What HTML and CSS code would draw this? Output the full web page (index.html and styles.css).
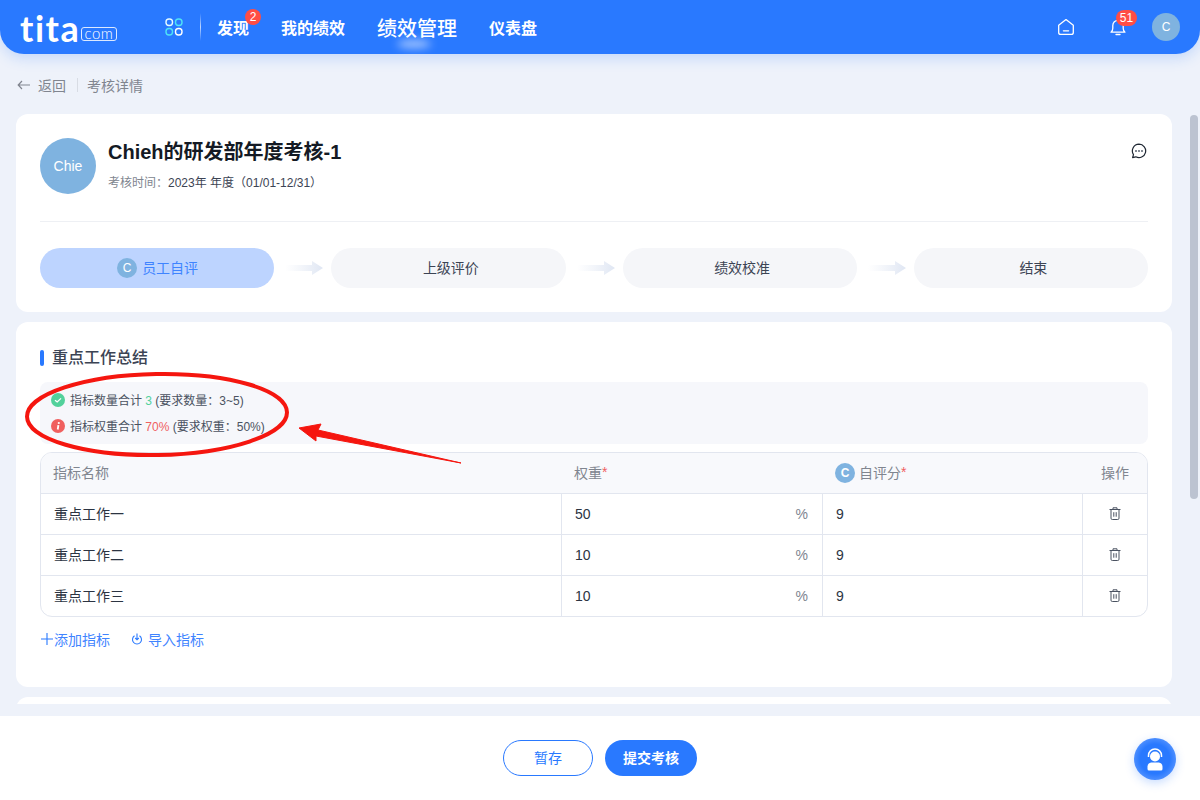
FILE: index.html
```html
<!DOCTYPE html>
<html lang="zh-CN">
<head>
<meta charset="utf-8">
<title>考核详情</title>
<link rel="stylesheet" href="styles.css">
</head>
<body>
<div class="page">
  <header class="topbar">
    <div class="logo"><span class="logo-main">tita</span><span class="logo-com">com</span></div>
    <svg class="apps" width="18" height="18" viewBox="0 0 18 18" fill="none" stroke-width="1.4">
      <rect x="1" y="1" width="6.500" height="6.500" rx="3" stroke="#e6fbff"/><rect x="10.500" y="1" width="6.500" height="6.500" rx="3" stroke="#4fe3f5"/>
      <rect x="1" y="10.500" width="6.500" height="6.500" rx="3" stroke="#4fe3f5"/><rect x="10.500" y="10.500" width="6.500" height="6.500" rx="3" stroke="#fff"/>
    </svg>
    <span class="nav-sep"></span>
    <nav class="nav">
      <a class="nav-item">发现<span class="badge badge-round">2</span></a>
      <a class="nav-item">我的绩效</a>
      <a class="nav-item nav-active">绩效管理<span class="glow"></span></a>
      <a class="nav-item">仪表盘</a>
    </nav>
    <div class="top-right">
      <svg width="18" height="18" viewBox="0 0 18 18" fill="none" stroke="#fff" stroke-width="1.3">
        <path d="M1.700 7.200 9 1.600l7.300 5.600v7.200a2 2 0 0 1-2 2H3.700a2 2 0 0 1-2-2z" stroke-linejoin="round"/><path d="M6.400 12.800h5.200" stroke-linecap="round"/>
      </svg>
      <div class="bell">
        <svg width="18" height="18" viewBox="0 0 18 18" fill="none" stroke="#fff" stroke-width="1.3">
          <path d="M2 14.200c1.300-1 1.800-2.200 1.800-4V7.500a5.200 5.200 0 0 1 10.400 0v2.700c0 1.800.5 3 1.800 4z" stroke-linejoin="round"/><path d="M7 16.500h4" stroke-linecap="round"/>
        </svg>
        <span class="badge badge-pill">51</span>
      </div>
      <div class="avatar avatar-top">C</div>
    </div>
  </header>

  <main class="main">
    <div class="crumbs">
      <svg class="crumb-arrow" width="14" height="10" viewBox="0 0 14 10" fill="none" stroke="#80858f" stroke-width="1.2"><path d="M13 5H1.200M5 1 1.200 5 5 9"/></svg>
      <span class="crumb-back">返回</span>
      <span class="crumb-sep"></span>
      <span class="crumb-title">考核详情</span>
    </div>

    <section class="card card-head">
      <div class="head-row">
        <div class="avatar avatar-big">Chie</div>
        <div class="head-text">
          <h1 class="title">Chieh的研发部年度考核-1</h1>
          <p class="subtitle"><span class="muted">考核时间：</span>2023年 年度（01/01-12/31）</p>
        </div>
        <svg class="comment" width="16" height="16" viewBox="0 0 16 16" fill="none" stroke="#1f2733" stroke-width="1.2">
          <path d="M8 1.200a6.700 6.700 0 1 1-3.200 12.600L1.600 14.600l.9-3A6.700 6.700 0 0 1 8 1.200z" stroke-linejoin="round"/>
          <g fill="#5b6472" stroke="none"><circle cx="5" cy="8" r="1"/><circle cx="8" cy="8" r="1"/><circle cx="11" cy="8" r="1"/></g>
        </svg>
      </div>
      <div class="steps">
        <div class="step step-on"><span class="avatar avatar-step">C</span>员工自评</div>
        <svg class="step-arrow" width="57" height="14" viewBox="0 0 57 14"><defs><linearGradient id="ag" x1="0" x2="1" y1="0" y2="0"><stop offset="0" stop-color="#e6ebf5" stop-opacity="0"/><stop offset="1" stop-color="#dfe6f3"/></linearGradient></defs><path d="M11 4h27V0l11 7-11 7v-4H11z" fill="url(#ag)"/></svg>
        <div class="step">上级评价</div>
        <svg class="step-arrow" width="57" height="14" viewBox="0 0 57 14"><path d="M11 4h27V0l11 7-11 7v-4H11z" fill="url(#ag)"/></svg>
        <div class="step">绩效校准</div>
        <svg class="step-arrow" width="57" height="14" viewBox="0 0 57 14"><path d="M11 4h27V0l11 7-11 7v-4H11z" fill="url(#ag)"/></svg>
        <div class="step">结束</div>
      </div>
    </section>

    <section class="card card-body">
      <h2 class="section-title">重点工作总结</h2>
      <div class="notice">
        <div class="notice-line">
          <svg width="14" height="14" viewBox="0 0 14 14"><circle cx="7" cy="7" r="7" fill="#52d19b"/><path d="M4 7.200 6.200 9 10 5.400" fill="none" stroke="#fff" stroke-width="1.3"/></svg>
          <span class="notice-text">指标数量合计 <em class="ok">3</em> (要求数量：3~5)</span>
        </div>
        <div class="notice-line">
          <svg width="14" height="14" viewBox="0 0 14 14"><circle cx="7" cy="7" r="7" fill="#f0605f"/><path d="M7.400 6.200 6.700 10.500" stroke="#fff" stroke-width="1.800"/><circle cx="7.800" cy="4" r="1.100" fill="#fff"/></svg>
          <span class="notice-text">指标权重合计 <em class="bad">70%</em> (要求权重：50%)</span>
        </div>
      </div>
      <div class="table">
        <div class="row row-head">
          <div class="cell">指标名称</div>
          <div class="cell">权重<i class="req">*</i></div>
          <div class="cell"><span class="avatar avatar-th">C</span>自评分<i class="req">*</i></div>
          <div class="cell cell-op">操作</div>
        </div>
        <div class="row">
          <div class="cell cell-name">重点工作一</div>
          <div class="cell cell-num">50<span class="pct">%</span></div>
          <div class="cell cell-num">9</div>
          <div class="cell cell-op"><svg class="trash" width="12" height="13" viewBox="0 0 12 13" fill="none" stroke="#4a5261"><path d="M.5 2.500h11M4 2.500V.8h4v1.700M2 2.500v8.700a1.300 1.300 0 0 0 1.300 1.300h5.400A1.300 1.300 0 0 0 10 11.200V2.500M4.800 5.200v4.500M7.200 5.200v4.500"/></svg></div>
        </div>
        <div class="row">
          <div class="cell cell-name">重点工作二</div>
          <div class="cell cell-num">10<span class="pct">%</span></div>
          <div class="cell cell-num">9</div>
          <div class="cell cell-op"><svg class="trash" width="12" height="13" viewBox="0 0 12 13" fill="none" stroke="#4a5261"><path d="M.5 2.500h11M4 2.500V.8h4v1.700M2 2.500v8.700a1.300 1.300 0 0 0 1.300 1.300h5.400A1.300 1.300 0 0 0 10 11.200V2.500M4.800 5.200v4.500M7.200 5.200v4.500"/></svg></div>
        </div>
        <div class="row">
          <div class="cell cell-name">重点工作三</div>
          <div class="cell cell-num">10<span class="pct">%</span></div>
          <div class="cell cell-num">9</div>
          <div class="cell cell-op"><svg class="trash" width="12" height="13" viewBox="0 0 12 13" fill="none" stroke="#4a5261"><path d="M.5 2.500h11M4 2.500V.8h4v1.700M2 2.500v8.700a1.300 1.300 0 0 0 1.300 1.300h5.400A1.300 1.300 0 0 0 10 11.200V2.500M4.800 5.200v4.500M7.200 5.200v4.500"/></svg></div>
        </div>
      </div>
      <div class="actions">
        <a class="action"><svg width="12" height="12" viewBox="0 0 12 12" stroke="#2979ff" stroke-width="1.100"><path d="M6 0v12M0 6h12"/></svg>添加指标</a>
        <a class="action action-import"><svg width="12" height="12" viewBox="0 0 12 12" fill="none" stroke="#2979ff" stroke-width="1.100"><path d="M3.500 2.800a4.500 4.500 0 1 0 5 0M6 .5v6M4.200 5 6 6.800 7.800 5"/></svg>导入指标</a>
      </div>
    </section>

    <section class="card card-next"></section>
    <div class="scrollbar"></div>
  </main>

  <footer class="footer">
    <button class="btn btn-line">暂存</button>
    <button class="btn btn-solid">提交考核</button>
    <div class="helper">
      <svg width="22" height="25" viewBox="0 0 22 25" fill="#fff">
        <path d="M4.500 10V8.500a6.500 6.500 0 0 1 13 0V10" fill="none" stroke="#fff" stroke-width="1.500"/>
        <circle cx="11" cy="9.500" r="5"/>
        <path d="M3.500 22v-2.500c0-2.500 2-4 4.500-4h6c2.500 0 4.500 1.500 4.500 4V22a1.500 1.500 0 0 1-1.500 1.500H5A1.500 1.500 0 0 1 3.500 22z"/>
      </svg>
    </div>
  </footer>

  <svg class="markup" width="1200" height="800" viewBox="0 0 1200 800" fill="none">
    <ellipse cx="157" cy="414.500" rx="130" ry="40.500" stroke="#f5160f" stroke-width="4" transform="rotate(-1 157 414.500)"/>
    <path d="M299 428 321 424 318 430 461 463 316 436 316 441z" fill="#f5160f" stroke="#f5160f" stroke-linejoin="round"/>
  </svg>
</div>
</body>
</html>
```
FILE: styles.css
```css
* { box-sizing: border-box; }
html, body { margin: 0; height: 100%; overflow: hidden; }
body {
  font-family: "Liberation Sans", "Noto Sans CJK SC", sans-serif;
  font-size: 14px;
  color: #1f2733;
  background: #eef2fa;
}
.page { position: relative; display: flex; flex-direction: column; height: 800px; }

/* top bar */
.topbar {
  flex: none;
  height: 54px;
  display: flex;
  align-items: center;
  padding: 0 20px;
  background: #2979ff;
  border-radius: 0 0 24px 24px;
  box-shadow: 0 4px 14px rgba(41, 121, 255, .22);
  color: #fff;
  position: relative;
  z-index: 2;
}
.logo { display: flex; align-items: flex-end; justify-content: space-between; width: 97px; height: 26px; margin-top: 2px; }
.logo-main { font-family: Lato, sans-serif; font-weight: 700; font-size: 36px; line-height: 26px; letter-spacing: 1.500px; color: #fff; }
.logo-com {
  width: 36px;
  height: 14px;
  border: 1px solid #dce9ff;
  border-radius: 3px;
  font-family: Lato, sans-serif;
  font-size: 15px;
  font-weight: 300;
  line-height: 11px;
  letter-spacing: .5px;
  text-align: center;
  color: #fff;
}
.apps { margin-left: 48px; flex: none; }
.nav-sep { width: 1px; height: 28px; margin: 0 16px 0 17px; background: linear-gradient(transparent, rgba(255,255,255,.7), transparent); }
.nav { display: flex; align-items: center; gap: 32px; }
.nav-item { position: relative; font-size: 16px; font-weight: 700; white-space: nowrap; }
.nav-active { font-size: 20px; font-weight: 500; }
.glow {
  position: absolute; left: 20px; bottom: -6px; width: 34px; height: 8px;
  border-radius: 50%; background: rgba(255,255,255,.6); filter: blur(4px);
}
.badge { position: absolute; background: #ff4d45; color: #fff; font-weight: 400; text-align: center; }
.badge-round { top: -6px; right: -12px; width: 16px; height: 16px; border-radius: 50%; font-size: 12px; line-height: 16px; }
.top-right { margin-left: auto; display: flex; align-items: center; }
.top-right > svg { margin-right: 34px; }
.bell { position: relative; width: 18px; height: 18px; margin-right: 25px; }
.badge-pill { top: -8px; left: 7px; width: 21px; height: 16px; border-radius: 8px; font-size: 12px; line-height: 16px; }
.avatar { display: flex; align-items: center; justify-content: center; border-radius: 50%; background: #7fb3e0; color: #fff; flex: none; }
.avatar-top { width: 28px; height: 28px; font-size: 12px; }

/* main */
.main { position: relative; flex: 1; min-height: 0; overflow: hidden; padding: 0 28px 0 16px; }
.crumbs { height: 60px; padding-top: 2px; display: flex; align-items: center; font-size: 14px; color: #80858f; }
.crumb-arrow { margin-left: 1px; }
.crumb-back { margin-left: 7px; }
.crumb-sep { width: 1px; height: 14px; margin: 0 9px 0 11px; background: #d8dce4; }
.card { background: #fff; border-radius: 12px; }
.card + .card { margin-top: 10px; }
.card-head { height: 198px; padding: 24px 24px 0; }
.head-row { position: relative; display: flex; height: 84px; gap: 12px; }
.head-text { flex: 1; }
.title { margin: 3px 0 0; font-size: 20px; font-weight: 700; line-height: 22px; color: #141a24; }
.subtitle { margin: 11px 0 0; font-size: 12px; line-height: 18px; color: #3c4454; }
.muted { color: #80858f; }
.comment { margin: 5px 1px 0 0; }
.avatar-big { width: 56px; height: 56px; font-size: 14px; }
.steps { display: flex; align-items: center; margin-top: 26px; position: relative; }
.steps::before { content: ""; position: absolute; left: 0; right: 0; top: -27px; height: 1px; background: #eef0f4; }
.step {
  flex: 1 1 234px; min-width: 0; height: 40px; padding: 0 0 2px 5px; display: flex; align-items: center; justify-content: center;
  background: #f5f6f9; border-radius: 20px; font-size: 14px; color: #3c4454;
}
.step-on { padding-left: 1px; background: #bdd4ff; color: #3f84ff; }
.step-arrow { flex: none; }
.avatar-step { width: 20px; height: 20px; margin: 2px 5px 0 0; font-size: 12px; }

.card-body { height: 365px; padding: 24px 24px 0; }
.section-title {
  margin: 0; height: 24px; font-size: 16px; font-weight: 500; line-height: 24px; color: #3c4454;
  display: flex; align-items: center;
}
.section-title::before { content: ""; width: 4px; height: 16px; margin-right: 8px; border-radius: 2px; background: #2979ff; }
.notice { margin-top: 12px; height: 62px; padding: 8px 11px; background: #f6f7fb; border-radius: 8px; font-size: 12px; color: #4a5261; }
.notice-line { display: flex; align-items: center; gap: 5px; height: 20px; margin-bottom: 6px; }
.notice-text { margin-bottom: 2px; }
.notice em { font-style: normal; }
.ok { color: #52d19b; }
.bad { color: #f0605f; }
.table { margin-top: 8px; border: 1px solid #e2e6ef; border-radius: 12px; overflow: hidden; }
.row { display: grid; grid-template-columns: 520px 261px 260px 1fr; height: 41px; border-top: 1px solid #e2e6ef; }
.row-head { height: 40px; border-top: 0; background: #f8f9fc; color: #80858f; }
.cell { display: flex; align-items: center; padding: 0 13px; position: relative; border-left: 1px solid #e2e6ef; }
.cell:first-child { border-left: 0; }
.row-head .cell { border-left: 0; padding-bottom: 2px; }
.row-head .cell:first-child { padding-left: 12px; }
.cell-name { color: #2c3442; padding-bottom: 2px; }
.cell-num { color: #2c3442; padding-right: 14px; }
.cell-op { justify-content: center; padding: 0; }
.row-head .cell-op { padding-left: 1px; }
.trash { margin-bottom: 1px; }
.pct { margin-left: auto; color: #80858f; }
.req { color: #f0605f; font-style: normal; }
.avatar-th { width: 20px; height: 20px; margin: 2px 4px 0 0; font-size: 12px; font-weight: 700; }
.actions { display: flex; align-items: center; margin-top: 13px; height: 18px; font-size: 14px; color: #3f84ff; }
.action { display: flex; align-items: center; }
.action:first-child { margin-left: 1px; }
.action:first-child svg { margin-right: 1px; }
.action-import { margin-left: 21px; }
.action-import svg { margin-right: 5px; }
.card-next { height: 60px; }
.scrollbar { position: absolute; right: 2px; top: 61px; width: 8px; height: 384px; border-radius: 4px; background: #bcc3d1; }

/* footer */
.footer {
  position: relative; flex: none; height: 84px; margin-top: 12px;
  display: flex; align-items: center; justify-content: center; gap: 12px;
  background: #fff;
}
.btn { height: 36px; padding: 0 0 2px; border-radius: 18px; font: inherit; font-size: 14px; }
.btn-line { width: 90px; background: #fff; border: 1px solid #2979ff; color: #2979ff; }
.btn-solid { width: 92px; background: #2979ff; border: 0; color: #fff; font-weight: 700; }
.helper {
  position: absolute; right: 24px; top: 22px; width: 42px; height: 42px; border-radius: 50%;
  display: flex; align-items: center; justify-content: center;
  background: radial-gradient(circle, #2979ff 50%, #7fadff 100%);
  box-shadow: 0 3px 10px rgba(41, 121, 255, .25);
}
.markup { position: absolute; left: 0; top: 0; pointer-events: none; z-index: 3; }
```
